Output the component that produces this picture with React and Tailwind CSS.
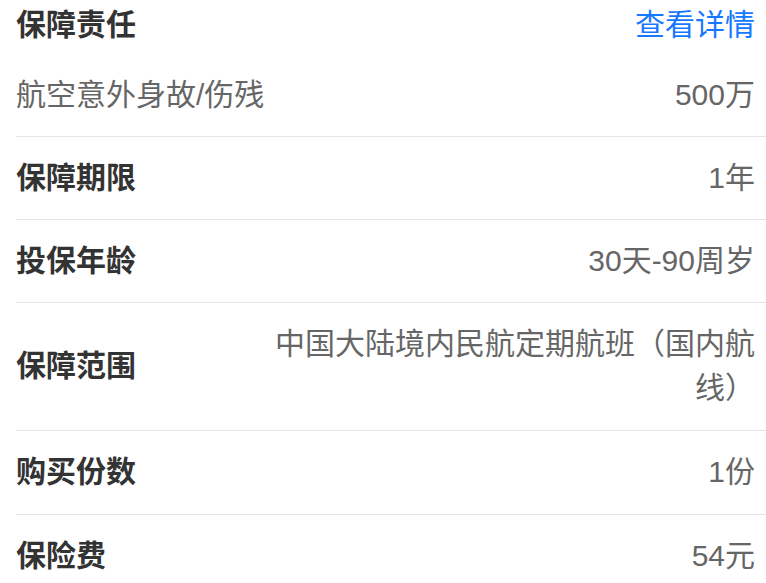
const rows = [
  { label: "保障期限", value: "1年", pad: "py-[19px]" },
  { label: "投保年龄", value: "30天-90周岁", pad: "py-[19px]" },
  { label: "保障范围", value: "中国大陆境内民航定期航班（国内航线）", pad: "pt-[19px] pb-[20px]" },
  { label: "购买份数", value: "1份", pad: "pt-[19px] pb-[20px]" },
  { label: "保险费", value: "54元", pad: "py-[19px]" },
];

export default function App() {
  return (
    <div
      className="bg-white w-[766px] min-h-[583px] pl-4 text-[30px] leading-[44px]"
      style={{ fontFamily: '"Liberation Sans", "Noto Sans CJK SC", sans-serif' }}
    >
      {/* 保障责任 */}
      <div className="border-b border-[#e5e5e5] pr-[11px]">
        <div className="flex items-center justify-between pt-[3px]">
          <span className="font-bold text-[#333]">保障责任</span>
          <span className="text-[#1677ff]">查看详情</span>
        </div>
        <div className="flex items-center justify-between mt-[26px] pb-[19px]">
          <span className="text-[#666]">航空意外身故/伤残</span>
          <span className="text-[#666]">500万</span>
        </div>
      </div>

      {rows.map((r, i) => (
        <div
          key={r.label}
          className={
            "flex items-center justify-between pr-[11px] " +
            r.pad +
            (i < rows.length - 1 ? " border-b border-[#e5e5e5]" : "")
          }
        >
          <span className="font-bold text-[#333] shrink-0">{r.label}</span>
          <span className="text-[#666] text-right max-w-[482px]">{r.value}</span>
        </div>
      ))}
    </div>
  );
}
